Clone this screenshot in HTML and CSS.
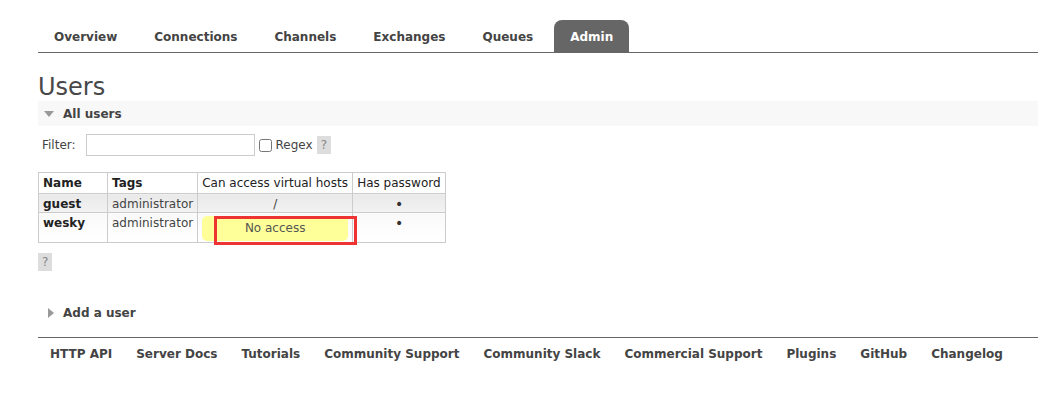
FILE: index.html
```html
<!DOCTYPE html>
<html lang="en">

<head>
    <meta charset="UTF-8">
    <title>RabbitMQ Management</title>
    <link rel="stylesheet" href="styles.css">
</head>

<body>
    <nav class="tabs">
        <ul>
            <li><a href="#">Overview</a></li>
            <li><a href="#">Connections</a></li>
            <li><a href="#">Channels</a></li>
            <li><a href="#">Exchanges</a></li>
            <li><a href="#">Queues</a></li>
            <li class="selected"><a href="#">Admin</a></li>
        </ul>
    </nav>

    <main>
        <h1>Users</h1>

        <div class="section">
            <h2 class="toggle open"><span class="arrow"></span>All users</h2>
            <div class="filter">
                <label for="filter">Filter:</label>
                <input type="text" id="filter">
                <label class="regex"><input type="checkbox"> Regex</label>
                <span class="help">?</span>
            </div>

            <table class="list">
                <thead>
                    <tr>
                        <th class="c-name bold">Name</th>
                        <th class="c-tags bold">Tags</th>
                        <th class="c-vhosts">Can access virtual hosts</th>
                        <th class="c-pass">Has password</th>
                    </tr>
                </thead>
                <tbody>
                    <tr class="alt1">
                        <td class="bold">guest</td>
                        <td>administrator</td>
                        <td class="center">/</td>
                        <td class="center dot">&bull;</td>
                    </tr>
                    <tr class="alt2">
                        <td class="bold">wesky</td>
                        <td>administrator</td>
                        <td class="vhosts">
                            <div class="warning">No access</div>
                            <!-- annotation on the screenshot -->
                            <span class="mark"></span>
                        </td>
                        <td class="center dot">&bull;</td>
                    </tr>
                </tbody>
            </table>
            <span class="help help-block">?</span>
        </div>

        <div class="section">
            <h2 class="toggle closed"><span class="arrow"></span>Add a user</h2>
        </div>
    </main>

    <footer>
        <ul>
            <li><a href="#">HTTP API</a></li>
            <li><a href="#">Server Docs</a></li>
            <li><a href="#">Tutorials</a></li>
            <li><a href="#">Community Support</a></li>
            <li><a href="#">Community Slack</a></li>
            <li><a href="#">Commercial Support</a></li>
            <li><a href="#">Plugins</a></li>
            <li><a href="#">GitHub</a></li>
            <li><a href="#">Changelog</a></li>
        </ul>
    </footer>
</body>

</html>
```

FILE: styles.css
```css
/* Base */
body {
    margin: 0;
    padding: 20px 0 0 38px;
    font-family: "DejaVu Sans", Verdana, sans-serif;
    font-size: 12px;
    color: #444;
    background: #fff;
}

a {
    color: #444;
    text-decoration: none;
}

/* Tabs */
.tabs ul {
    list-style: none;
    margin: 0;
    padding: 0;
    display: flex;
    gap: 5px;
    border-bottom: 1px solid #666;
}

.tabs li a {
    display: block;
    height: 32px;
    line-height: 34px;
    padding: 0 16px;
    font-weight: bold;
    border-radius: 8px 8px 0 0;
}

.tabs li.selected a {
    background: #666;
    color: #fff;
}

/* Content */
h1 {
    margin: 20px 0 0;
    font-size: 24px;
    font-weight: normal;
    line-height: 28px;
    color: #484848;
}

.section h2 {
    margin: 0;
    font-size: 12px;
    font-weight: bold;
    display: flex;
    align-items: center;
    height: 25px;
    padding-left: 6px;
}

.toggle.open {
    background: #f8f8f8;
}

.toggle .arrow {
    width: 0;
    height: 0;
    margin-right: 9px;
}

.toggle.open .arrow {
    border-left: 5px solid transparent;
    border-right: 5px solid transparent;
    border-top: 6px solid #999;
}

.toggle.closed .arrow {
    margin-left: 4px;
    margin-right: 9px;
    border-top: 5px solid transparent;
    border-bottom: 5px solid transparent;
    border-left: 6px solid #999;
}

.filter {
    display: flex;
    align-items: center;
    margin: 8px 0 0 4px;
    height: 22px;
}

.filter input[type="text"] {
    width: 163px;
    height: 18px;
    margin: 0 0 0 10px;
    padding: 1px 2px;
    border: 1px solid #ccc;
    font: inherit;
}

.regex {
    display: flex;
    align-items: center;
    margin-left: 4px;
}

.regex input {
    width: 13px;
    height: 13px;
    margin: 0 4px 0 0;
}

.help {
    display: inline-block;
    background: #ddd;
    color: #888;
    padding: 0 4px;
    height: 18px;
    line-height: 18px;
    margin-left: 4px;
}

.help-block {
    display: block;
    width: 6px;
    margin: 10px 0 0;
}

/* Table */
table.list {
    border-collapse: collapse;
    margin-top: 16px;
}

table.list th,
table.list td {
    border: 1px solid #ccc;
    padding: 3px 4px 1px;
    text-align: left;
    font-weight: normal;
    vertical-align: top;
    height: 14px;
    line-height: 14px;
}

table.list th {
    padding: 3px 4px 3px;
    color: #222;
}

table.list .bold {
    font-weight: bold;
    color: #222;
}

.c-name { width: 60px; }
.c-tags { width: 81px; }
.c-vhosts { width: 146px; }
.c-pass { width: 84px; }

table.list td.center {
    text-align: center;
}

table.list td.dot {
    font-size: 14px;
    color: #333;
}

tr.alt1 td {
    background: linear-gradient(#e9e9e9, #f2f2f2);
}

tr.alt2 td {
    background: linear-gradient(#f9f9f9, #fff);
}

td.vhosts {
    position: relative;
    padding: 2px 4px 1px 4px;
}

.warning {
    background: #ffff99;
    border-radius: 5px;
    height: 25px;
    line-height: 25px;
    text-align: center;
    color: #555;
}

.mark {
    position: absolute;
    left: 16px;
    top: 3px;
    width: 137px;
    height: 23px;
    border: 3px solid #ee3333;
}

.section + .section {
    margin-top: 29px;
}

/* Footer */
footer {
    margin-top: 12px;
    border-top: 1px solid #666;
}

footer ul {
    list-style: none;
    margin: 0;
    padding: 0;
    display: flex;
}

footer li a {
    display: block;
    padding: 9px 12px;
    font-weight: bold;
}
```
